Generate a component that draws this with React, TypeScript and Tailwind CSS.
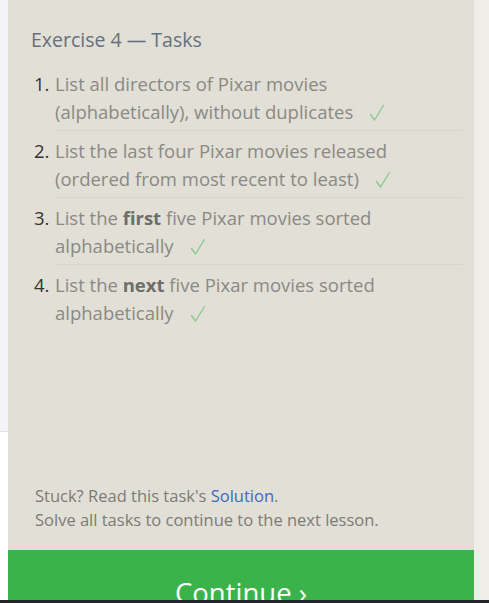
import React from 'react';

type Task = { id: number; lines: React.ReactNode };

const tasks: Task[] = [
    { id: 1, lines: <>List all directors of Pixar movies (alphabetically), without duplicates</> },
    { id: 2, lines: <>List the last four Pixar movies released (ordered from most recent to least)</> },
    { id: 3, lines: <>List the <b className="font-bold text-[#6f6d68]">first</b> five Pixar movies sorted alphabetically</> },
    { id: 4, lines: <>List the <b className="font-bold text-[#6f6d68]">next</b> five Pixar movies sorted alphabetically</> },
];

function Check() {
    return (
        <svg viewBox="0 0 16 18" className="ml-[16px] inline-block h-[18px] w-[16px] align-[-3px]" fill="none">
            <path d="M1.5 10.5 L5.5 16 L14.5 1.5" stroke="#8ccb8f" strokeWidth="1.4" strokeLinecap="round" strokeLinejoin="round" />
        </svg>
    );
}

export default function App() {
    return (
        <div className="flex h-[603px] w-[489px] flex-col overflow-hidden bg-[#efede7] font-['Open_Sans',sans-serif]">
            <div className="flex min-h-0 flex-1">
                {/* left edge of the neighbouring pane */}
                <div className="flex w-[8px] flex-col">
                    <div className="h-[432px] border-b border-[#e2e2e6] bg-[#f4f4f6]" />
                    <div className="flex-1 bg-white" />
                </div>

                <div className="flex w-[466px] flex-col bg-[#e1dfd6]">
                    <div className="flex-1 pl-[23px] pr-[11px] pt-[26px]">
                        <h2 className="text-[19.5px] leading-[28px] text-[#66707c]">Exercise 4 — Tasks</h2>

                        <ol className="mt-[16px]">
                            {tasks.map((task, i) => (
                                <li
                                    key={task.id}
                                    className="flex pb-[4px] pt-[6px] first:pt-0"
                                >
                                    <span className="w-[24px] shrink-0 pl-[3px] text-[18.5px] leading-[28px] text-[#333333]">{task.id}.</span>
                                    <div className={i < tasks.length - 1 ? 'flex-1 border-b border-[#d6d4cb] pb-[4px] -mb-[4px]' : 'flex-1'}>
                                        <p className="pr-[50px] text-[18.5px] leading-[28px] text-[#8b8984]">
                                            {task.lines}
                                            <Check />
                                        </p>
                                    </div>
                                </li>
                            ))}
                        </ol>
                    </div>

                    <div className="px-[27px] pb-[18px] text-[16.5px] leading-[24px] text-[#7d7b76]">
                        <p>Stuck? Read this task's <a className="text-[#3b6cc2]">Solution</a>.</p>
                        <p>Solve all tasks to continue to the next lesson.</p>
                    </div>

                    <button className="h-[50px] shrink-0 overflow-hidden bg-[#3ab44a] pt-[25px] text-center text-[27.5px] leading-[36px] text-white">
                        Continue ›
                    </button>
                </div>

                <div className="flex-1 bg-[#efede7]" />
            </div>
            <div className="h-[3px] bg-[#23252b]" />
        </div>
    );
}
